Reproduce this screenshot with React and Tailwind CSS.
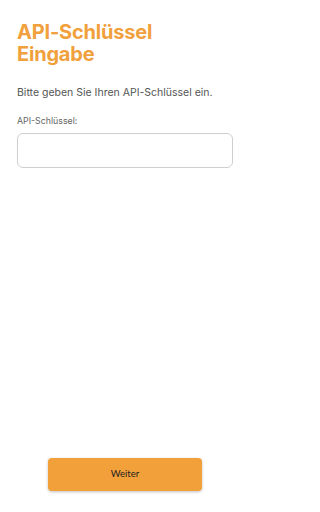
import React from "react";

export default function App() {
  return (
    <div className="w-[250px] h-[512px] bg-white flex flex-col px-[17px] font-['Inter',sans-serif]">
      <h1 className="mt-[21px] text-[20px] leading-[22px] font-bold text-[#f0a03c] tracking-[-0.2px]">
        API-Schlüssel
        <br />
        Eingabe
      </h1>
      <p className="mt-[21px] text-[10.5px] leading-[14px] text-[#555555]">
        Bitte geben Sie Ihren API-Schlüssel ein.
      </p>
      <label className="mt-[15px] text-[8.8px] leading-[12px] text-[#666666]">API-Schlüssel:</label>
      <input
        type="text"
        className="mt-[6px] h-[35px] w-full rounded-[6px] border border-[#cfcfcf] bg-white px-2 text-[10px] outline-none"
      />
      <div className="flex-1" />
      <div className="flex justify-center mb-[21px]">
        <button className="w-[154px] h-[33px] rounded-[4px] bg-[#f2a03a] text-[9.5px] text-[#222222] font-['Lato',sans-serif] shadow-[0_1px_3px_rgba(0,0,0,0.25)]">
          Weiter
        </button>
      </div>
    </div>
  );
}
